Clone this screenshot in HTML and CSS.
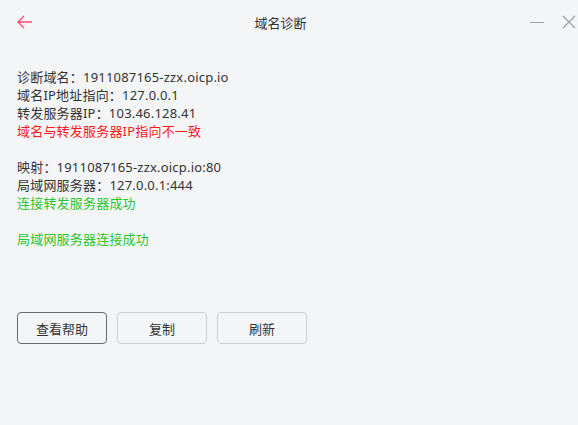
FILE: index.html
```html
<!DOCTYPE html>
<html lang="zh-CN">
<head>
  <meta charset="UTF-8">
  <meta name="viewport" content="width=device-width, initial-scale=1.0">
  <title>域名诊断</title>
  <link rel="stylesheet" href="styles.css">
</head>
<body>
  <!-- Title bar -->
  <div class="titlebar">
    <span class="back">
      <svg width="16" height="14" viewBox="0 0 16 14">
        <path d="M15 7H1M7 1L1 7l6 6" fill="none" stroke="#ff4d7e" stroke-width="1.4"/>
      </svg>
    </span>
    <div class="title">域名诊断</div>
    <div class="win-btns">
      <svg width="14" height="14" viewBox="0 0 14 14">
        <path d="M0 7.5h14" stroke="#a0a0a0" stroke-width="1"/>
      </svg>
      <svg width="14" height="14" viewBox="0 0 14 14">
        <path d="M1 1l12 12M13 1L1 13" stroke="#a0a0a0" stroke-width="1.2"/>
      </svg>
    </div>
  </div>

  <!-- Diagnosis output -->
  <div class="result">
    <div>诊断域名：1911087165-zzx.oicp.io</div>
    <div>域名IP地址指向：127.0.0.1</div>
    <div>转发服务器IP：103.46.128.41</div>
    <div class="bad">域名与转发服务器IP指向不一致</div>
    <div class="blank"></div>
    <div>映射：1911087165-zzx.oicp.io:80</div>
    <div>局域网服务器：127.0.0.1:444</div>
    <div class="ok">连接转发服务器成功</div>
    <div class="blank"></div>
    <div class="ok">局域网服务器连接成功</div>
  </div>

  <div class="actions">
    <button class="btn primary">查看帮助</button>
    <button class="btn">复制</button>
    <button class="btn">刷新</button>
  </div>
</body>
</html>
```

FILE: styles.css
```css
body {
  margin: 0;
  width: 578px;
  height: 425px;
  background-color: #f4f5f7;
  font-family: "Noto Sans", "Noto Sans CJK SC", sans-serif;
  color: #333;
  overflow: hidden;
}

.titlebar {
  height: 44px;
  display: flex;
  align-items: center;
  padding: 0 2px 0 17px;
}

.back {
  display: flex;
  width: 16px;
}

.title {
  flex: 1;
  text-align: center;
  font-size: 13px;
  color: #333;
  padding-right: 2px;
}

.win-btns {
  display: flex;
  gap: 18px;
}

.result {
  padding: 24px 17px 0;
  font-size: 13px;
  line-height: 18px;
  letter-spacing: 0.2px;
}

.blank {
  height: 18px;
}

.bad {
  color: #ff1a1a;
}

.ok {
  color: #2bc52b;
}

.actions {
  display: flex;
  gap: 10px;
  padding: 64px 17px 0;
}

.btn {
  width: 90px;
  height: 32px;
  background-color: #f4f5f7;
  border: 1px solid #cfcfd2;
  border-radius: 4px;
  font-family: "Noto Sans CJK SC", sans-serif;
  font-size: 13px;
  color: #333;
  cursor: pointer;
}

.btn.primary {
  border-color: #6b6b6b;
}
```
